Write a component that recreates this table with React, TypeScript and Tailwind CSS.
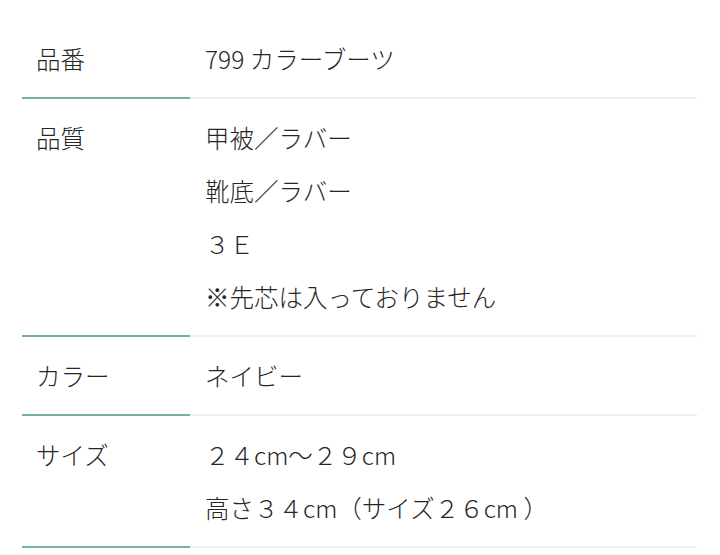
import React, { type FC, type ReactNode } from "react";

type Row = { label: string; lines: ReactNode[] };

const rows: Row[] = [
  { label: "品番", lines: ["799 カラーブーツ"] },
  {
    label: "品質",
    lines: ["甲被／ラバー", "靴底／ラバー", "３Ｅ", "※先芯は入っておりません"],
  },
  { label: "カラー", lines: ["ネイビー"] },
  { label: "サイズ", lines: ["２４cm～２９cm", "高さ３４cm（サイズ２６cm ）"] },
];

const SpecRow: FC<{ row: Row }> = ({ row }) => {
  return (
    <div className="flex">
      <div className="w-[168px] shrink-0 border-b-2 border-[#74b09b] py-3 pl-[14px] leading-[53px]">
        {row.label}
      </div>
      <div className="flex-1 border-b-2 border-[#efefef] py-3 pl-[15px] leading-[53px]">
        {row.lines.map((line, i) => (
          <div key={i}>{line}</div>
        ))}
      </div>
    </div>
  );
};

export default function App() {
  return (
    <div
      className="h-[555px] w-[720px] overflow-hidden bg-white pt-[20px] pl-[22px] pr-[23px] text-[24.5px] font-light text-[#262626]"
      style={{ fontFamily: '"Noto Sans CJK JP", "Noto Sans", sans-serif' }}
    >
      {rows.map((row) => (
        <SpecRow key={row.label} row={row} />
      ))}
    </div>
  );
}
